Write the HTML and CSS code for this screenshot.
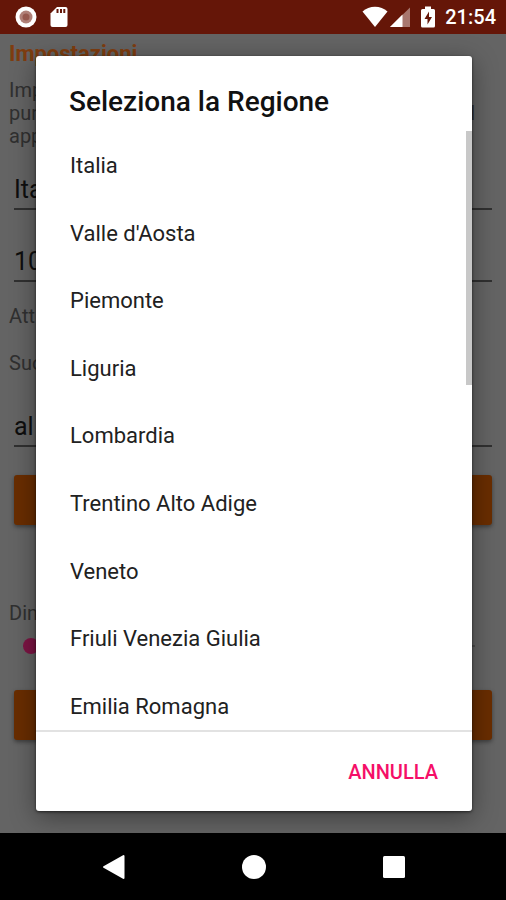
FILE: index.html
```html
<!DOCTYPE html>
<html lang="it">
<head>
  <meta charset="UTF-8" />
  <meta name="viewport" content="width=device-width, initial-scale=1" />
  <title>Impostazioni</title>
  <link rel="stylesheet" href="styles.css">
</head>
<body>
  <header class="status-bar">
    <div class="status-group">
      <svg class="icon-record" width="22" height="22" viewBox="0 0 22 22">
        <circle cx="11" cy="11" r="10.5" fill="#fff"/>
        <circle cx="11" cy="11" r="6.5" fill="#b08078"/>
        <circle cx="11" cy="11" r="3.5" fill="#96584e"/>
      </svg>
      <svg class="icon-card" width="18" height="22" viewBox="0 0 18 22">
        <path d="M7 1h8.500a2 2 0 0 1 2 2v16a2 2 0 0 1-2 2h-13a2 2 0 0 1-2-2V7.500z" fill="#fff"/>
        <path d="M6.500 3h2v4h-2zM10 3h2v4h-2zM13.300 3h2v4h-2z" fill="#651608"/>
      </svg>
    </div>
    <div class="status-group">
      <svg width="26" height="22" viewBox="0 0 26 22">
        <path d="M.5 5.500C7-.8 19-.8 25.500 5.500L13 21z" fill="#fff"/>
      </svg>
      <svg class="icon-signal" width="20" height="22" viewBox="0 0 20 22">
        <path d="M0 21L20 1.500V21z" fill="#a8776f"/>
        <path d="M0 21L12.500 8.500V21z" fill="#fff"/>
      </svg>
      <svg class="icon-battery" width="14" height="22" viewBox="0 0 14 22">
        <path d="M4 .5h6V3h2.500A1.500 1.500 0 0 1 14 4.500v15.500a1.500 1.500 0 0 1-1.500 1.500h-11A1.500 1.500 0 0 1 0 20V4.500A1.500 1.500 0 0 1 1.500 3H4z" fill="#fff"/>
        <path d="M8 5.500L3.500 13h3v5.500L11 11H8z" fill="#651608"/>
      </svg>
      <span class="clock">21:54</span>
    </div>
  </header>

  <div class="app">
    <main class="settings">
      <h1>Impostazioni</h1>
      <div class="intro">
        <div>Imp</div>
        <div class="intro-line"><span>pur</span><span>l</span></div>
        <div>app</div>
      </div>
      <select class="field" aria-label="Regione">
        <option>Italia</option>
      </select>
      <select class="field field-gap" aria-label="Numero">
        <option>10</option>
      </select>
      <p class="note">Att</p>
      <p class="note">Suo</p>
      <select class="field field-last" aria-label="Suono">
        <option>al</option>
      </select>
      <button class="action" aria-label="Salva"></button>
      <label class="size-label" for="size">Dim</label>
      <input class="size" id="size" type="range" min="0" max="10" value="0">
      <button class="action" aria-label="Conferma"></button>
    </main>

    <div class="scrim">
      <div class="dialog" role="dialog" aria-labelledby="dialog-title">
        <h2 id="dialog-title">Seleziona la Regione</h2>
        <div class="list-wrap">
          <ul class="regions">
            <li><button>Italia</button></li>
            <li><button>Valle d'Aosta</button></li>
            <li><button>Piemonte</button></li>
            <li><button>Liguria</button></li>
            <li><button>Lombardia</button></li>
            <li><button>Trentino Alto Adige</button></li>
            <li><button>Veneto</button></li>
            <li><button>Friuli Venezia Giulia</button></li>
            <li><button>Emilia Romagna</button></li>
          </ul>
          <div class="scroll-thumb"></div>
        </div>
        <div class="dialog-actions">
          <button class="cancel">ANNULLA</button>
        </div>
      </div>
    </div>
  </div>

  <nav class="nav-bar">
    <button aria-label="Indietro">
      <svg width="24" height="26" viewBox="0 0 24 26"><path d="M21.500 2v22L2 13z" fill="#fff" stroke="#fff" stroke-width="2" stroke-linejoin="round"/></svg>
    </button>
    <button aria-label="Home">
      <svg width="24" height="24" viewBox="0 0 24 24"><circle cx="12" cy="12" r="12" fill="#fff"/></svg>
    </button>
    <button aria-label="Recenti">
      <svg width="22" height="22" viewBox="0 0 22 22"><rect width="22" height="22" rx="1.500" fill="#fff"/></svg>
    </button>
  </nav>
</body>
</html>
```
FILE: styles.css
```css
* {
  box-sizing: border-box;
}
body {
  margin: 0;
  min-height: 100vh;
  display: flex;
  flex-direction: column;
  background: #000;
  font-family: Roboto, "Noto Sans", sans-serif;
}
button, select, input {
  font-family: inherit;
  margin: 0;
  border: none;
}
svg {
  display: block;
}

/* status bar */
.status-bar {
  height: 34px;
  padding: 0 10px 0 15px;
  display: flex;
  justify-content: space-between;
  align-items: center;
  background: #651608;
}
.status-group {
  display: flex;
  align-items: center;
}
.icon-card {
  margin-left: 13px;
}
.icon-signal {
  margin-left: 2px;
}
.icon-battery {
  margin: 0 10px 0 11px;
}
.clock {
  color: #fff;
  font-size: 20px;
  font-weight: 500;
  line-height: 24px;
}

/* settings page */
.app {
  position: relative;
  flex: 1;
  display: flex;
  flex-direction: column;
  background: #c8c8c8;
  overflow: hidden;
}
.settings {
  display: flex;
  flex-direction: column;
  padding: 6px 9px 0;
  color: #606060;
  font-size: 20px;
}
.settings h1 {
  margin: 0;
  color: #ff7a20;
  font-size: 22px;
  font-weight: 700;
  line-height: 28px;
}
.intro {
  margin-top: 11px;
  line-height: 23px;
}
.intro-line {
  display: flex;
  justify-content: space-between;
  padding-right: 22px;
}
.field {
  appearance: none;
  height: 40px;
  margin: 22px 5px 0;
  padding: 0;
  border-bottom: 2px solid #606060;
  border-radius: 0;
  background: transparent;
  color: #1c1c1c;
  font-size: 25px;
}
.field-gap {
  margin-top: 32px;
}
.note {
  margin: 22px 0 0;
  line-height: 25px;
}
.field-last {
  margin-top: 31px;
}
.action {
  height: 50px;
  margin: 28px 5px 0;
  border-radius: 3px;
  background: #d25a00;
  box-shadow: 0 2px 4px rgba(0, 0, 0, 0.4);
}
.size-label {
  margin-top: 75px;
  line-height: 26px;
}
.size {
  appearance: none;
  height: 16px;
  margin: 12px 22px 8px 14px;
  background: linear-gradient(#9a9a9a, #9a9a9a) center / 100% 2px no-repeat;
}
.size::-webkit-slider-thumb {
  appearance: none;
  width: 16px;
  height: 16px;
  border-radius: 50%;
  background: #fa2888;
}

/* region dialog */
.scrim {
  position: absolute;
  inset: 0;
  padding: 22px 34px 22px 36px;
  display: flex;
  background: rgba(0, 0, 0, 0.5);
}
.dialog {
  flex: 1;
  display: flex;
  flex-direction: column;
  border-radius: 3px;
  background: #fff;
  box-shadow: 0 6px 26px rgba(0, 0, 0, 0.4), 0 1px 3px rgba(0, 0, 0, 0.6);
}
.dialog h2 {
  margin: 0;
  padding: 30px 33px 13px;
  color: #111;
  font-size: 28px;
  font-weight: 500;
  line-height: 32px;
}
.list-wrap {
  position: relative;
  flex: 1 1 0;
  overflow: hidden;
}
.regions {
  height: 608px;
  margin: 0;
  padding: 0;
  display: grid;
  grid-auto-rows: 1fr;
  list-style: none;
}
.regions li {
  display: grid;
}
.regions button {
  padding: 2px 34px 0;
  background: transparent;
  color: #212121;
  font-size: 22px;
  text-align: left;
}
.scroll-thumb {
  position: absolute;
  top: 0;
  right: 0;
  width: 6px;
  height: 254px;
  background: #c8c8c8;
}
.dialog-actions {
  height: 81px;
  padding: 0 22px;
  display: flex;
  justify-content: flex-end;
  align-items: center;
  border-top: 2px solid #e2e2e2;
}
.cancel {
  padding: 12px;
  background: transparent;
  color: #f50f68;
  font-size: 20px;
  font-weight: 500;
}

/* system navigation */
.nav-bar {
  height: 67px;
  padding: 0 42px 0 44px;
  display: grid;
  grid-template-columns: repeat(3, 1fr);
  background: #000;
}
.nav-bar button {
  display: flex;
  justify-content: center;
  align-items: center;
  padding: 0;
  background: transparent;
}
```
